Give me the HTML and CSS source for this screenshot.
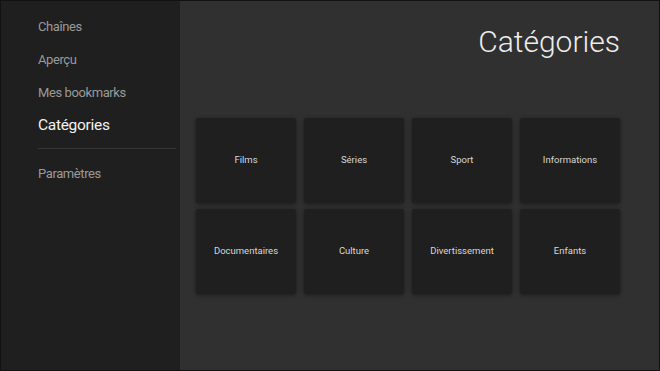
FILE: index.html
```html
<!DOCTYPE html>
<html lang="fr">
<head>
  <meta charset="UTF-8" />
  <meta name="viewport" content="width=device-width,initial-scale=1" />
  <title>Catégories</title>
  <link rel="stylesheet" href="styles.css">
</head>
<body>
  <div class="app">

    <!-- Side menu -->
    <nav class="menu">
      <div class="menu-item">Chaînes</div>
      <div class="menu-item">Aperçu</div>
      <div class="menu-item">Mes bookmarks</div>
      <div class="menu-item active">Catégories</div>
      <div class="menu-sep"></div>
      <div class="menu-item extra">Paramètres</div>
    </nav>

    <!-- Content -->
    <main class="content">
      <h1 class="title">Catégories</h1>
      <div class="grid">
        <div class="tile">Films</div>
        <div class="tile">Séries</div>
        <div class="tile">Sport</div>
        <div class="tile">Informations</div>
        <div class="tile">Documentaires</div>
        <div class="tile">Culture</div>
        <div class="tile">Divertissement</div>
        <div class="tile">Enfants</div>
      </div>
    </main>

  </div>
</body>
</html>
```

FILE: styles.css
```css
html, body { margin: 0; height: 100%; }
body { font-family: Roboto, "Noto Sans", sans-serif; background: #303030; }

.app {
  display: flex; height: 100%;
  box-sizing: border-box;
  border: 1px solid #121212;
}

/* Side menu */
.menu {
  width: 179px; flex: none;
  background: #1f1f1f;
  padding: 8.5px 0 0 37px;
  box-sizing: border-box;
}
.menu-item {
  height: 33px; line-height: 33px;
  font-size: 13px; letter-spacing: -.4px;
  color: #9a9a9a;
  white-space: nowrap;
}
.menu-item.active { font-size: 15.5px; letter-spacing: -.3px; color: #f2f2f2; }
.menu-item.extra { margin-top: 8px; }
.menu-sep {
  height: 1px; width: 138px;
  margin-top: 6px;
  background: #353535;
}

/* Content */
.content {
  flex: 1;
  padding: 21px 39px 0 16px;
}
.title {
  margin: 0;
  text-align: right;
  font-size: 30px; line-height: 40px;
  font-weight: 300;
  color: #ececec;
}
.grid {
  display: grid;
  grid-template-columns: repeat(4, 100px);
  grid-auto-rows: 85px;
  column-gap: 8px; row-gap: 6px;
  margin-top: 56px;
}
.tile {
  display: flex; align-items: center; justify-content: center;
  padding-bottom: 3px;
  background: #1f1f1f;
  border-radius: 2px;
  box-shadow: 0 1px 4px rgba(0,0,0,.45);
  font-size: 9.5px; color: #d8d8d8;
}
```
